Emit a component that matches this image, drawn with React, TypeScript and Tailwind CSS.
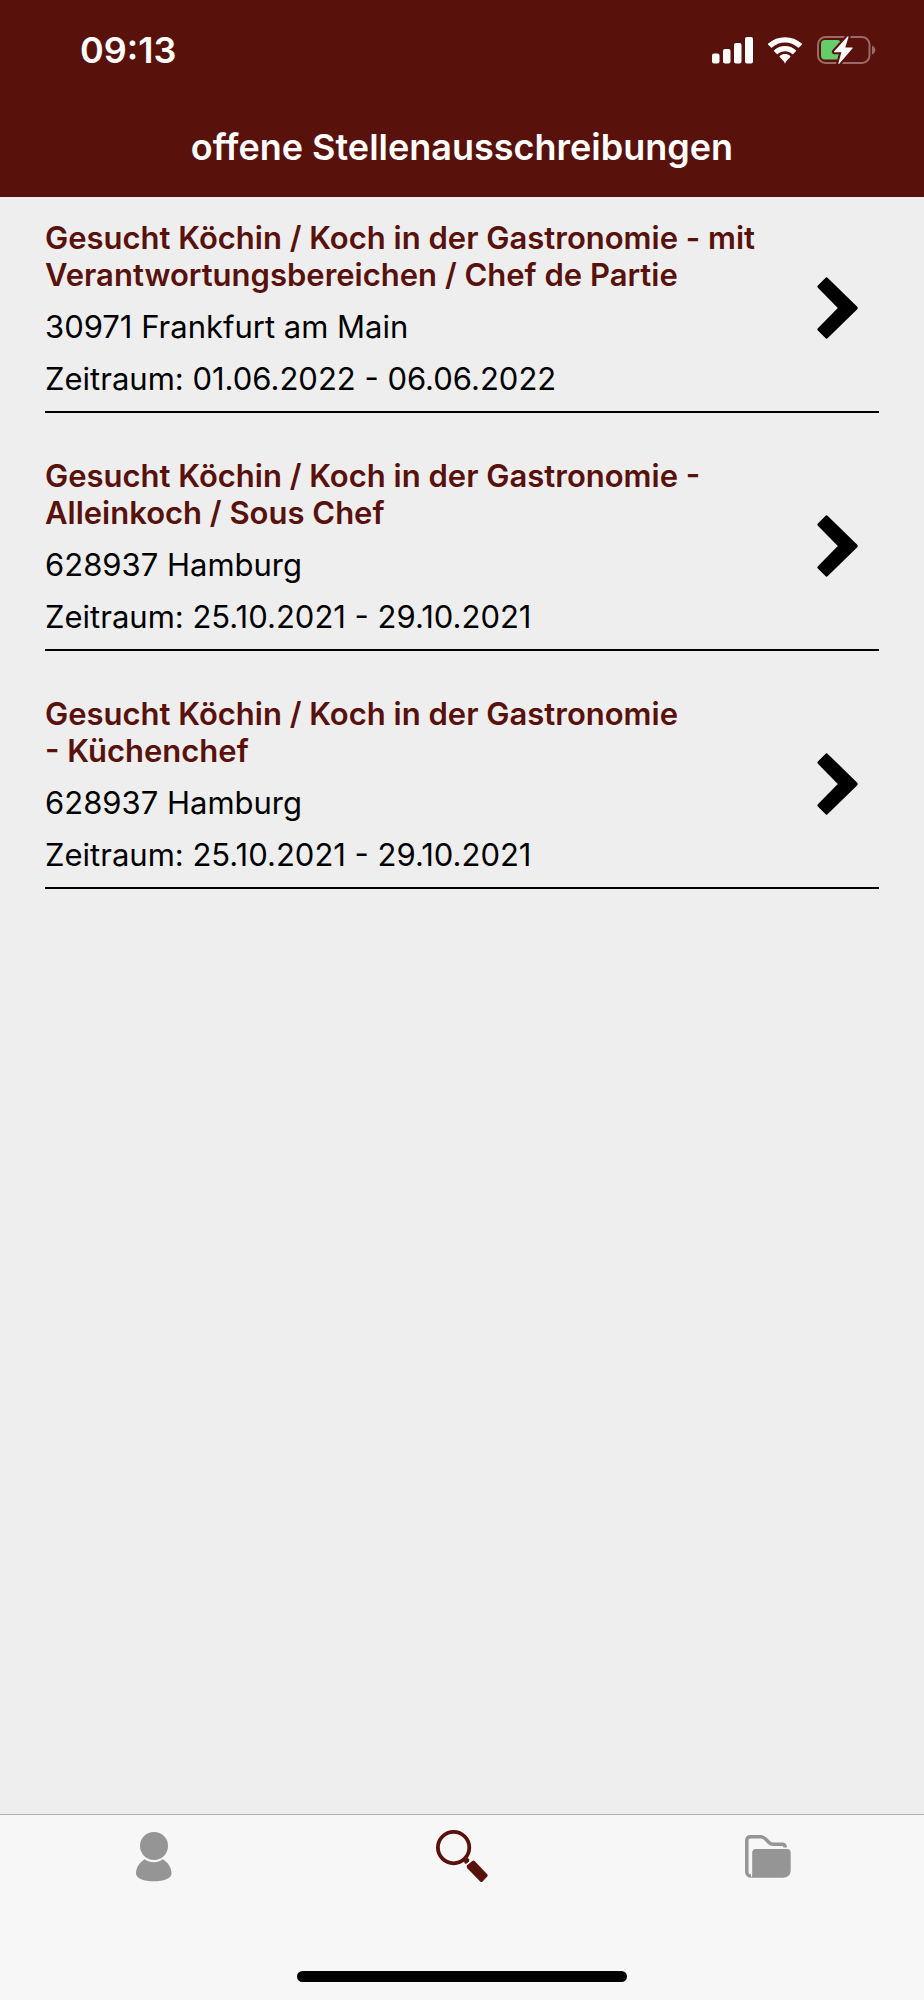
import React from "react";

interface Job {
    id: number;
    title: string;
    location: string;
    period: string;
}

const JOBS: Job[] = [
    {
        id: 1,
        title: "Gesucht Köchin / Koch in der Gastronomie - mit Verantwortungsbereichen / Chef de Partie",
        location: "30971 Frankfurt am Main",
        period: "01.06.2022 - 06.06.2022",
    },
    {
        id: 2,
        title: "Gesucht Köchin / Koch in der Gastronomie - Alleinkoch / Sous Chef",
        location: "628937 Hamburg",
        period: "25.10.2021 - 29.10.2021",
    },
    {
        id: 3,
        title: "Gesucht Köchin / Koch in der Gastronomie\n- Küchenchef",
        location: "628937 Hamburg",
        period: "25.10.2021 - 29.10.2021",
    },
];

function SignalIcon() {
    return (
        <svg width="41" height="27" viewBox="0 0 41 27" fill="currentColor" aria-hidden="true">
            <rect x="0" y="16.5" width="7.5" height="10" rx="2" />
            <rect x="11" y="12" width="7.5" height="14.5" rx="2" />
            <rect x="22" y="6" width="7.5" height="20.5" rx="2" />
            <rect x="33" y="0" width="8" height="26.5" rx="2" />
        </svg>
    );
}

function WifiIcon() {
    return (
        <svg width="36" height="27" viewBox="0 0 36 27" fill="currentColor" aria-hidden="true">
            <path d="M18 5.4c4.9 0 9.5 1.9 13 5.2.3.3.7.3 1 0l2.8-2.9c.3-.3.3-.8 0-1.1C30.2 2.4 24.3.2 18 .2S5.8 2.4 1.2 6.6c-.3.3-.3.8 0 1.1L4 10.6c.3.3.7.3 1 0 3.5-3.3 8.1-5.2 13-5.2z" />
            <path d="M18 14.3c2.7 0 5.2 1 7.2 2.8.3.3.8.3 1 0l2.7-2.8c.3-.3.3-.8 0-1.1C26 10.5 22.2 9 18 9s-8 1.5-10.900 4.200c-.3.3-.3.8 0 1.1l2.7 2.800c.3.3.7.3 1 0 2-1.800 4.500-2.800 7.200-2.800z" />
            <path d="M23.3 20c.3-.3.3-.8 0-1.1-3.1-2.600-7.500-2.600-10.600 0-.3.3-.3.8 0 1.100l4.700 4.900v1c.4.6.8.6 1.200 0v-1z" />
        </svg>
    );
}

function BatteryIcon() {
    const bolt = "M30.5 .4 17 15.4c-.4.5-.1.9.4.9h7L21.400 26.900c-.3 1 .5 1.300 1.100.6L35.600 12.300c.4-.5.1-.9-.4-.9h-6.900L31.500 1c.2-.8-.5-1.100-1-.6z";
    return (
        <svg width="59" height="28" viewBox="0 0 59 28" aria-hidden="true">
            <rect x="1" y="1" width="51.5" height="26" rx="7.5" fill="none" stroke="#9a6a68" strokeWidth="2" />
            <path d="M55 9.5c2 .8 3.3 2.6 3.3 4.5s-1.3 3.7-3.3 4.500z" fill="#9a6a68" />
            <rect x="4" y="4" width="20" height="19.5" rx="4" fill="#65cd69" />
            <path d={bolt} fill="#59110c" stroke="#59110c" strokeWidth="4" />
            <path d={bolt} fill="#fff" />
        </svg>
    );
}

function ChevronIcon() {
    return (
        <svg width="42" height="62" viewBox="0 0 42 62" fill="currentColor" aria-hidden="true">
            <path d="M8.4.9.9 8.4Q-.2 9.6.9 10.8L20.8 31 .9 51.2Q-.2 52.4.9 53.6L8.4 61.1Q9.6 62.2 10.8 61.1L40 32.5Q41.5 31 40 29.5L10.8.9Q9.6-.2 8.4.9Z" />
        </svg>
    );
}

function PersonIcon() {
    return (
        <svg width="36" height="50" viewBox="0 0 36 50" fill="currentColor" aria-hidden="true">
            <circle cx="18" cy="14" r="14" />
            <path d="M8.8 27.3C3.5 30.5 0 35.5 0 41.5 0 46.5 8 49.3 17.8 49.3s17.7-2.8 17.7-7.8c0-6-3.5-11-8.8-14.2C24 29.5 21 30.2 17.8 30.2s-6.300-.7-9-2.900z" />
        </svg>
    );
}

function SearchIcon() {
    return (
        <svg width="52" height="53" viewBox="0 0 52 53" fill="currentColor" aria-hidden="true">
            <circle cx="17.6" cy="17.6" r="15.7" fill="none" stroke="currentColor" strokeWidth="3.8" />
            <path d="M27.500 29.500 30 27l3.300 2.300-.3 2-2.200 2.200-2 .3z" />
            <path d="M31.4 34.9 36.300 30.900Q37.500 30 38.600 31.100L51.200 44.300Q52.200 45.500 51.200 46.600L46.600 51.400Q45.400 52.500 44.200 51.400L31.300 38.200Q29.900 36.400 31.400 34.900Z" />
        </svg>
    );
}

function FolderIcon() {
    return (
        <svg width="50" height="43" viewBox="0 0 50 43" aria-hidden="true">
            <path
                d="M6 41C3.5 41 1.8 39.5 1.8 37V5.5C1.8 3 3 1.8 5.5 1.8H15.5C18 1.8 19 2.5 20.5 4L24 7.500C25.3 8.8 26.5 9.3 28.5 9.3H37C39.200 9.3 40.200 10.200 40.200 12.500"
                fill="none"
                stroke="currentColor"
                strokeWidth="3.5"
            />
            <path d="M11 14h31c2.5 0 3.7 1.5 3.7 4v17c0 5-3 7.7-8 7.7H5c2-.5 2.200-2 2.200-4V18c0-2.500 1.300-4 3.800-4z" fill="currentColor" />
        </svg>
    );
}

function JobItem({ job }: { job: Job }) {
    return (
        <li className="border-b-2 border-black pb-[14px]">
            <a href={`#job-${job.id}`} className="flex items-center justify-between pr-5">
                <div className="max-w-[730px] text-[31px] leading-[37px]">
                    <h2 className="font-semibold whitespace-pre-line text-[#59110c]">{job.title}</h2>
                    <p className="mt-[15px]">{job.location}</p>
                    <p className="mt-[15px]">Zeitraum: {job.period}</p>
                </div>
                <ChevronIcon />
            </a>
        </li>
    );
}

const TABS = [
    { label: "Profil", icon: <PersonIcon />, active: false },
    { label: "Suche", icon: <SearchIcon />, active: true },
    { label: "Dokumente", icon: <FolderIcon />, active: false },
];

export default function App() {
    return (
        <div className="flex min-h-screen flex-col bg-[#eeeeee] font-['Inter',sans-serif] text-black">
            <header className="bg-[#59110c] text-white">
                <div className="flex h-[100px] items-center justify-between pr-12 pl-20">
                    <span className="text-[36px] font-semibold">09:13</span>
                    <div className="flex items-center gap-[14px]">
                        <SignalIcon />
                        <WifiIcon />
                        <BatteryIcon />
                    </div>
                </div>
                <div className="flex h-[97px] items-center justify-center pb-1">
                    <h1 className="text-[36px] font-semibold">offene Stellenausschreibungen</h1>
                </div>
            </header>

            <main className="flex-1 px-[45px] pt-[22px]">
                <ul className="flex flex-col gap-11">
                    {JOBS.map((job) => (
                        <JobItem key={job.id} job={job} />
                    ))}
                </ul>
            </main>

            <footer className="border-t border-[#b2b2b2] bg-[#f7f7f7]">
                <nav className="grid h-[156px] grid-cols-3 pt-[15px]">
                    {TABS.map((tab) => (
                        <button
                            key={tab.label}
                            type="button"
                            aria-label={tab.label}
                            className={`flex h-[53px] items-center justify-center ${tab.active ? "text-[#59110c]" : "text-[#959595]"}`}
                        >
                            {tab.icon}
                        </button>
                    ))}
                </nav>
                {/* Home indicator */}
                <div className="mx-auto mb-[18px] h-[11px] w-[330px] rounded-full bg-black" />
            </footer>
        </div>
    );
}
